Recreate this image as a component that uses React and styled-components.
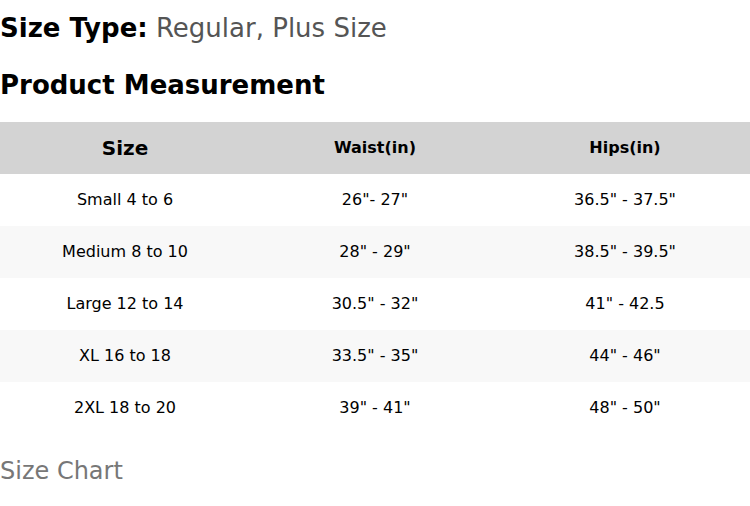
import React from "react";
import styled, { createGlobalStyle } from "styled-components";

const Global = createGlobalStyle`
  html, body { margin: 0; padding: 0; background: #fff; }
  body { font-family: "DejaVu Sans", "Liberation Sans", sans-serif; color: #000; }
`;

const Page = styled.div`
  width: 750px;
  display: flex;
  flex-direction: column;
`;

const SizeType = styled.p`
  margin: 0;
  padding-top: 13px;
  font-size: 26px;
  line-height: 30px;
  color: #555;
  white-space: nowrap;
`;

const Label = styled.strong`
  color: #000;
  font-weight: bold;
`;

const Heading = styled.h3`
  margin: 27px 0 0;
  font-size: 26px;
  line-height: 30px;
  font-weight: bold;
`;

const Table = styled.div`
  margin-top: 22px;
  display: flex;
  flex-direction: column;
`;

const Row = styled.div`
  display: grid;
  grid-template-columns: repeat(3, 1fr);
  height: 52px;
  align-items: center;
  background: ${(p) => (p.$head ? "#d3d3d3" : p.$alt ? "#f8f8f8" : "#fff")};
`;

const Cell = styled.div`
  text-align: center;
  font-size: ${(p) => (p.$big ? "20px" : "16px")};
  font-weight: ${(p) => (p.$head ? "bold" : "normal")};
  line-height: 24px;
`;

const Footer = styled.p`
  margin: 23px 0 0;
  font-size: 24px;
  line-height: 28px;
  color: #777;
`;

const rows = [
  ["Small 4 to 6", "26\"- 27\"", "36.5\" - 37.5\""],
  ["Medium 8 to 10", "28\" - 29\"", "38.5\" - 39.5\""],
  ["Large 12 to 14", "30.5\" - 32\"", "41\" - 42.5"],
  ["XL 16 to 18", "33.5\" - 35\"", "44\" - 46\""],
  ["2XL 18 to 20", "39\" - 41\"", "48\" - 50\""],
];

export default function App() {
  return (
    <Page>
      <Global />
      <SizeType>
        <Label>Size Type:</Label> Regular, Plus Size
      </SizeType>
      <Heading>Product Measurement</Heading>
      <Table>
        <Row $head>
          <Cell $head $big>Size</Cell>
          <Cell $head>Waist(in)</Cell>
          <Cell $head>Hips(in)</Cell>
        </Row>
        {rows.map((r, i) => (
          <Row key={i} $alt={i % 2 === 1}>
            {r.map((c, j) => (
              <Cell key={j}>{c}</Cell>
            ))}
          </Row>
        ))}
      </Table>
      <Footer>Size Chart</Footer>
    </Page>
  );
}
